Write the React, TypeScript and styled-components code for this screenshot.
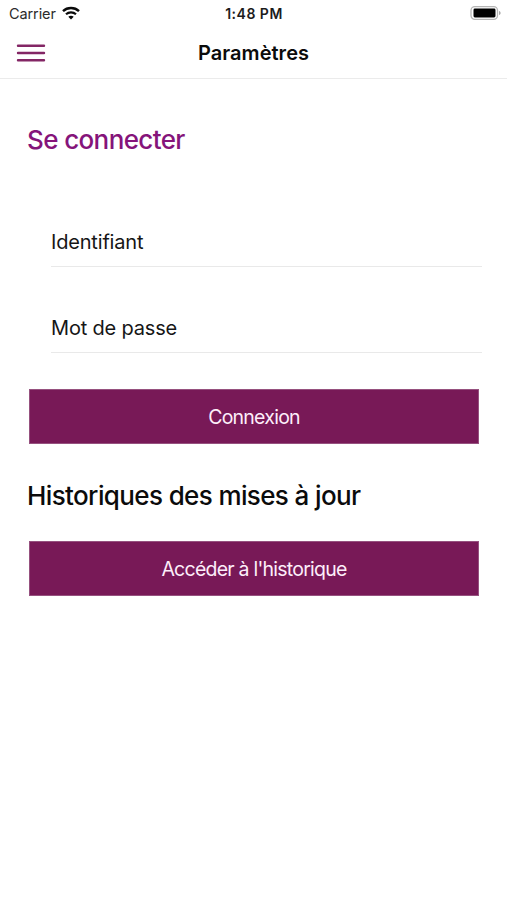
import React from 'react';
import styled, { createGlobalStyle } from 'styled-components';

const GlobalStyle = createGlobalStyle`
  * { box-sizing: border-box; }
  body {
    margin: 0;
    background: #fff;
    color: #0b0b0b;
    font-family: Inter, 'Liberation Sans', sans-serif;
  }
`;

const Screen = styled.div`
  min-height: 900px;
  display: flex;
  flex-direction: column;
  background: #fff;
`;

const StatusBar = styled.div`
  height: 27px;
  padding: 0 6px 0 9px;
  display: grid;
  grid-template-columns: 1fr auto 1fr;
  align-items: center;
`;

const Carrier = styled.div`
  display: flex;
  align-items: center;
  gap: 6px;
  font-size: 14.5px;
  line-height: 27px;
  letter-spacing: -0.1px;
  color: #2b2b2b;

  svg { margin-top: -1px; }
`;

const Clock = styled.div`
  margin-right: 2px;
  font-size: 14px;
  font-weight: 600;
  line-height: 27px;
  letter-spacing: 0.5px;
  color: #1c1c1c;
`;

const BatterySlot = styled.div`
  display: flex;
  justify-content: flex-end;
  padding-bottom: 1px;
`;

const NavBar = styled.header`
  height: 52px;
  padding: 0 16px;
  display: grid;
  grid-template-columns: 30px 1fr 30px;
  align-items: center;
  border-bottom: 1px solid #ebebeb;
`;

const MenuButton = styled.button`
  padding: 0;
  border: 0;
  background: none;
  display: flex;
`;

const NavTitle = styled.h1`
  margin: 0;
  text-align: center;
  font-size: 20px;
  font-weight: 600;
  line-height: 24px;
  letter-spacing: 0.05px;
`;

const Content = styled.main`
  padding: 45px 25px 0 27px;
  display: flex;
  flex-direction: column;
`;

const SectionTitle = styled.h2<{ $accent?: boolean }>`
  margin: 0;
  font-size: 26px;
  font-weight: 500;
  line-height: 32px;
  letter-spacing: -0.62px;
  color: ${(p) => (p.$accent ? '#85147a' : '#0b0b0b')};
`;

const Form = styled.form`
  margin-top: 61px;
  display: flex;
  flex-direction: column;
`;

const Field = styled.label`
  margin-left: 24px;
  height: 50px;
  padding-top: 12px;
  border-bottom: 1px solid #e9e9e9;
  font-size: 20px;
  line-height: 26px;
  letter-spacing: -0.18px;
  color: #161616;

  & + & { margin-top: 36px; }
`;

const ActionButton = styled.button<{ $top: number }>`
  margin: ${(p) => p.$top}px 3px 0 2px;
  height: 55px;
  padding: 0;
  border: 1px solid #96517f;
  background: #781957;
  color: #fdeefa;
  font: 400 19.5px/24px Inter, 'Liberation Sans', sans-serif;
  letter-spacing: -0.76px;
`;

const HistoryButton = styled(ActionButton)`
  padding-top: 1px;
`;

const HistorySection = styled.section`
  margin-top: 36px;
  display: flex;
  flex-direction: column;
`;

const WifiIcon = () => (
  <svg width="18" height="14" viewBox="0 0 18 14" fill="none" stroke="#0a0a0a">
    <path d="M1 5.1C5.4.9 12.6.9 17 5.1" strokeWidth="2.4" />
    <path d="M4 8.3c2.8-2.6 7.2-2.6 10 0" strokeWidth="2.2" />
    <path d="M6.3 10.7c1.5-1.4 3.9-1.4 5.4 0L9 13.5z" fill="#0a0a0a" stroke="none" />
  </svg>
);

const BatteryIcon = () => (
  <svg width="31" height="14" viewBox="0 0 31 14">
    <rect x="1" y="0.7" width="26.5" height="12.6" rx="3.8" fill="#fff" stroke="#b5b5b5" strokeWidth="1.3" />
    <rect x="3.5" y="2.6" width="22" height="8.8" rx="1.4" fill="#000" />
    <path d="M29 5v4c1-.3 1.6-1.1 1.6-2S30 5.3 29 5z" fill="#a8a8a8" />
  </svg>
);

const MenuIcon = () => (
  <svg width="30" height="20" viewBox="0 0 30 20" stroke="#832665" strokeWidth="2.4" strokeLinecap="round">
    <path d="M2 2.7H28M2 10H28M2 17.3H28" />
  </svg>
);

export default function App() {
  return (
    <>
      <GlobalStyle />
      <Screen>
        <StatusBar>
          <Carrier>
            <span>Carrier</span>
            <WifiIcon />
          </Carrier>
          <Clock>1:48 PM</Clock>
          <BatterySlot>
            <BatteryIcon />
          </BatterySlot>
        </StatusBar>
        <NavBar>
          <MenuButton aria-label="Menu">
            <MenuIcon />
          </MenuButton>
          <NavTitle>Paramètres</NavTitle>
        </NavBar>
        <Content>
          <SectionTitle $accent>Se connecter</SectionTitle>
          <Form>
            <Field>Identifiant</Field>
            <Field>Mot de passe</Field>
            <ActionButton type="button" $top={36}>Connexion</ActionButton>
          </Form>
          <HistorySection>
            <SectionTitle>Historiques des mises à jour</SectionTitle>
            <HistoryButton type="button" $top={29}>Accéder à l'historique</HistoryButton>
          </HistorySection>
        </Content>
      </Screen>
    </>
  );
}
